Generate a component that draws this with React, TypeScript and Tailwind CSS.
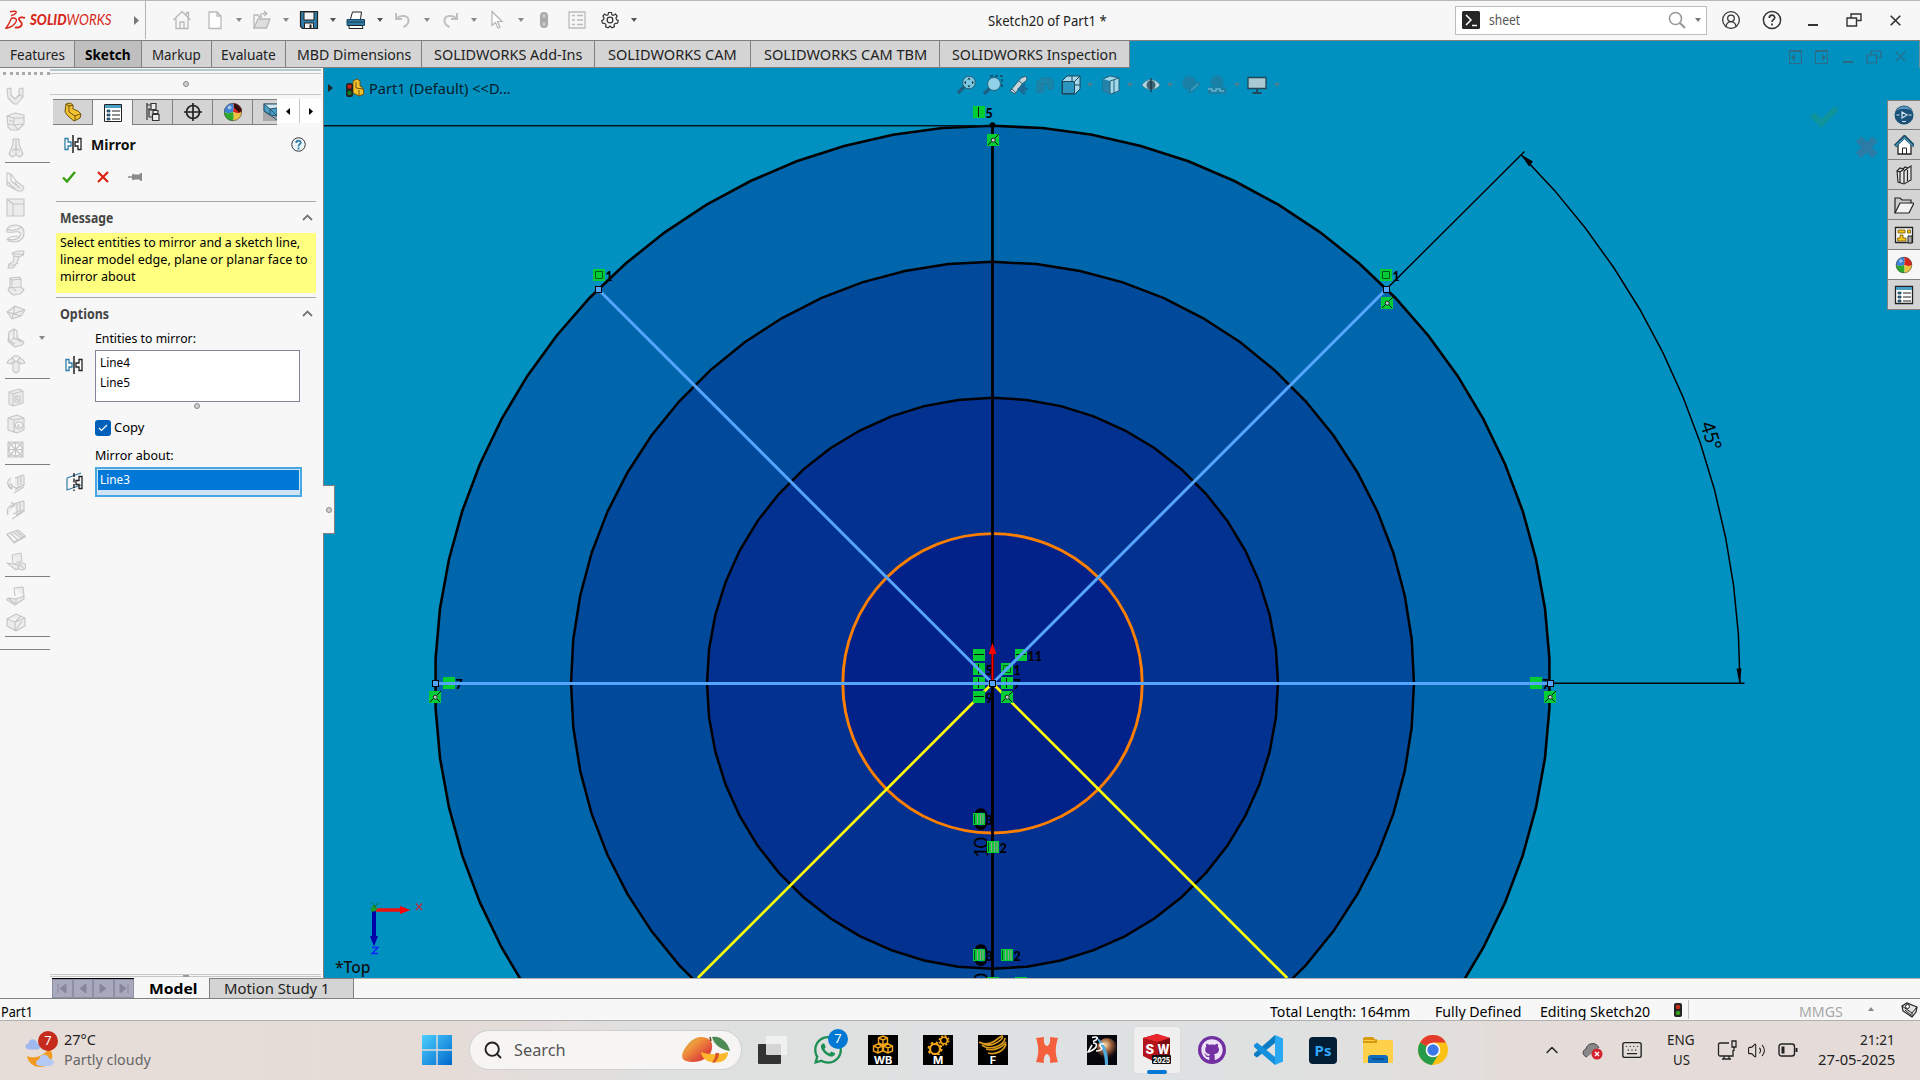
import React, { useLayoutEffect, useRef, useState } from "react";
import {
  Search, Keyboard, ChevronUp, Volume2, CircleUserRound,
} from "lucide-react";
import { FaWhatsapp, FaGithub } from "react-icons/fa";

/* Text squeezed or stretched to a fixed advance width. */
function Fit({ w, className = "", children }: { w: number; className?: string; children: React.ReactNode }) {
  const ref = useRef<HTMLSpanElement>(null);
  const [k, setK] = useState(1);
  useLayoutEffect(() => {
    if (ref.current) setK(w / ref.current.offsetWidth);
  }, [w]);
  return (
    <span className={"inline-block shrink-0 text-left " + className} style={{ width: w }}>
      <span ref={ref} className="inline-block origin-left whitespace-nowrap" style={{ transform: `scaleX(${k})` }}>
        {children}
      </span>
    </span>
  );
}

type SvgProps = { w?: number; h?: number; vb?: string; className?: string; children: React.ReactNode };
function Svg({ w = 20, h = 20, vb = "0 0 20 20", className = "", children }: SvgProps) {
  return (
    <svg width={w} height={h} viewBox={vb} fill="none" className={"block shrink-0 " + className}>
      {children}
    </svg>
  );
}

function Drop({ w = "w-[23px]", color = "text-[#555]" }: { w?: string; color?: string }) {
  return (
    <span className={"flex shrink-0 items-center justify-center " + w + " " + color}>
      <Svg w={6} h={4} vb="0 0 6 4"><path d="M0 0h6L3 4z" fill="currentColor" /></Svg>
    </span>
  );
}

function Slot({ w = "w-6", children }: { w?: string; children: React.ReactNode }) {
  return <span className={"flex shrink-0 items-center justify-center " + w}>{children}</span>;
}

function Dot() {
  return <span className="block h-[6px] w-[6px] rounded-full border border-[#8a8a8a] bg-[#d0d0d0]" />;
}

/* ---------- title bar ---------- */
function TitleBar() {
  return (
    <div className="flex h-[41px] shrink-0 items-center border-t border-b border-t-[#b8b8b8] border-b-[#808080] bg-[#f7f7f7] pb-px">
      <div className="flex h-full w-[146px] shrink-0 items-center border-r border-[#b4b4b4] pl-[5px]">
        <Svg w={21} h={20} vb="0 0 21 20">
          <path d="M5 1.800c3.500-.8 7-.8 6 1-.8 1.300-2.500 2.200-5 3" stroke="#d8281c" strokeWidth="1.500" />
          <path d="M6.500 8.200c4.500-.8 6 1.200 4 4.500-1.800 2.800-5.500 5-9.500 5.500 2.500-3.500 4-6.500 5.500-10z" stroke="#d8281c" strokeWidth="1.400" />
          <path d="M20 8c-3-1.300-6.200-.6-6 1.300.2 1.800 3.400 2.700 2.800 5.200-.5 2.200-3.500 3.300-7 3.200" stroke="#d8281c" strokeWidth="1.800" />
        </Svg>
        <Fit w={82} className="ml-1 font-['Lato'] text-[15.500px] italic text-[#d8281c]">
          <b className="font-black">SOLID</b>WORKS
        </Fit>
        <span className="ml-[22px]"><Svg w={5} h={9} vb="0 0 5 9"><path d="M0 0l5 4.500L0 9z" fill="#777" /></Svg></span>
      </div>
      <div className="ml-6 flex h-full items-center">
        <Slot><Svg><path d="M1.500 10L10 1.500l8.500 8.500M4 8.500v10h12v-10M8 18v-6h4v6M14.500 5V2.500h2V7" stroke="#b9b9b9" strokeWidth="1.300" /></Svg></Slot>
        <span className="w-[9px]" />
        <Slot><Svg><path d="M4 2h8l4 4v12.500H4zM12 2v4h4" stroke="#b9b9b9" strokeWidth="1.300" fill="#fff" /></Svg></Slot><Drop color="text-[#888]" />
        <Slot><Svg><path d="M2 18V5h4l1 2h3" stroke="#b9b9b9" strokeWidth="1.300" /><path d="M2 18l4-9h12l-3.500 9z" stroke="#b9b9b9" strokeWidth="1.300" fill="#dedede" /><path d="M8 7c0-3 3-4 6-3.500M12 1l3 2.500-3 2.500" stroke="#b9b9b9" strokeWidth="1.300" /></Svg></Slot><Drop color="text-[#888]" />
        <Slot><Svg><path d="M1.500 1.500h17v17h-15l-2-2z" fill="#2f7ca6" stroke="#222" strokeWidth="1.200" /><path d="M5 2h10v8H5z" fill="#f4f4f4" stroke="#222" /><path d="M5.500 13h9v5.500h-9z" fill="#eee" stroke="#222" /><path d="M10.500 14.500h2v3.500h-2z" fill="#222" /></Svg></Slot><Drop />
        <Slot><Svg><path d="M4.500 9l2-7h9l-1 7" fill="#fff" stroke="#222" /><path d="M1 9.500h17.500v6H1z" fill="#2f7ca6" stroke="#1c4a63" /><path d="M3 15.500h13l1 3H3z" fill="#fff" stroke="#222" /><path d="M1 12h17" stroke="#1c3a50" /></Svg></Slot><Drop />
        <Slot><Svg><path d="M3 3v6h6M3.500 8.500C7 4.500 16 5 15.500 11c0 3-3 5-5 6" stroke="#c0c0c0" strokeWidth="2" /></Svg></Slot><Drop color="text-[#888]" />
        <Slot><Svg><path d="M17 3v6h-6M16.500 8.500C13 4.500 4 5 4.500 11c0 3 3 5 5 6" stroke="#c0c0c0" strokeWidth="2" /></Svg></Slot><Drop color="text-[#888]" />
        <Slot><Svg><path d="M5 1.500v14l3.500-3 2.500 5.500 2-1-2.500-5.500H15z" stroke="#b4b4b4" strokeWidth="1.200" fill="#fff" /></Svg></Slot><Drop color="text-[#888]" />
        <Slot><Svg><rect x="6" y="2" width="8" height="16" rx="4" fill="#aaa" /><circle cx="10" cy="6" r="2" fill="#c8c8c8" /><circle cx="10" cy="14" r="2" fill="#c8c8c8" /></Svg></Slot>
        <span className="w-[9px]" />
        <Slot><Svg><path d="M2 2h16v16H2zM5 5.500h3M5 10h3M5 14.500h3M10 5.500h6M10 10h6M10 14.500h6" stroke="#bcbcbc" strokeWidth="1.300" /></Svg></Slot>
        <span className="w-[9px]" />
        <Slot><Svg w={18} h={18} vb="0 0 24 24"><path d="M10 2h4l.6 3 2 .9L19.300 4l2.200 2.700-1.500 2.500.6 2.200L23 13l-1 3.400-3 .2-1.500 1.600.3 3-3.300 1.200L12 20l-2.500 2.400-3.300-1.200.3-3L5 16.600l-3-.2L1 13l2.400-1.600.6-2.200-1.500-2.500L4.700 4l2.700 1.900 2-.9z" stroke="#333" strokeWidth="1.600" /><circle cx="12" cy="12" r="3.800" stroke="#333" strokeWidth="1.700" /></Svg></Slot><Drop />
      </div>
      <Fit w={119} className="ml-[343px] text-[14px] text-[#222]">Sketch20 of Part1 *</Fit>
      <div className="ml-[348px] flex h-[29px] w-[252px] shrink-0 items-center border border-[#bdbdbd] bg-white pl-[6px]">
        <Svg w={18} h={18} vb="0 0 18 18"><rect width="18" height="18" rx="1.500" fill="#262626" /><path d="M4 4l5 5-5 5M10 14.500h5" stroke="#fff" strokeWidth="1.500" /></Svg>
        <Fit w={31} className="-mt-[2px] ml-[9px] text-[14px] text-[#555]">sheet</Fit>
        <Svg w={18} h={18} vb="0 0 18 18" className="ml-[148px]"><circle cx="7.500" cy="7.500" r="6" stroke="#999" strokeWidth="1.600" /><path d="M12 12l5 5" stroke="#999" strokeWidth="2.200" /></Svg>
        <Drop color="text-[#777]" />
      </div>
      <div className="flex items-center text-[#333]">
        <Slot w="w-[48px]"><CircleUserRound size={20} strokeWidth={1.500} /></Slot>
        <Slot w="w-[34px]"><Svg><circle cx="10" cy="10" r="8.600" stroke="#333" strokeWidth="1.500" /><path d="M7.300 8c0-3.800 5.600-3.600 5.400-.3-.1 2-2.700 2-2.700 4.300M10 13.500v2" stroke="#333" strokeWidth="1.700" /></Svg></Slot>
        <Slot w="w-[48px]"><span className="mt-[9px] block h-[2px] w-[10px] bg-[#333]" /></Slot>
        <Slot w="w-[34px]"><Svg w={16} h={14} vb="0 0 16 14"><path d="M5 4.500V1h10v6.500h-4M1 5h9.500v8H1z" stroke="#333" strokeWidth="1.400" /></Svg></Slot>
        <Slot w="w-[48px]"><Svg w={11} h={11} vb="0 0 11 11"><path d="M.7.7l9.600 9.600M10.300.7L.7 10.300" stroke="#333" strokeWidth="1.600" /></Svg></Slot>
      </div>
    </div>
  );
}

/* ---------- command manager tabs ---------- */
const TABS: { label: string; tab: string; w: number; on?: boolean }[] = [
  { label: "Features", tab: "w-[75px]", w: 55 },
  { label: "Sketch", tab: "w-[67px]", w: 46, on: true },
  { label: "Markup", tab: "w-[70px]", w: 49 },
  { label: "Evaluate", tab: "w-[74px]", w: 55 },
  { label: "MBD Dimensions", tab: "w-[136px]", w: 114 },
  { label: "SOLIDWORKS Add-Ins", tab: "w-[173px]", w: 148 },
  { label: "SOLIDWORKS CAM", tab: "w-[156px]", w: 129 },
  { label: "SOLIDWORKS CAM TBM", tab: "w-[189px]", w: 163 },
  { label: "SOLIDWORKS Inspection", tab: "w-[190px]", w: 165 },
];

function CommandTabs() {
  return (
    <div className="flex h-[27px] shrink-0 bg-[#0091c1]">
      {TABS.map((t) => (
        <div
          key={t.label}
          className={
            "flex shrink-0 items-center justify-center border-r border-b border-[#808080] " + t.tab + " " +
            (t.on ? "bg-[#bfbfbf] font-bold text-black" : "bg-[#d4d4d4] text-[#222]")
          }
        >
          <Fit w={t.w} className="text-[15px]">{t.label}</Fit>
        </div>
      ))}
      <div className="flex flex-1 items-center justify-end gap-[13px] border-r border-[#6f8f9c] pr-[13px] pt-[4px]">
        <Svg w={13} h={14} vb="0 0 13 14"><path d="M.5.5h12v13H.5zM.5 1.500h12" stroke="#2d6b85" /><path d="M6 4v7L2 7.500z" fill="#2d6b85" /></Svg>
        <Svg w={13} h={14} vb="0 0 13 14"><path d="M.5.5h12v13H.5zM.5 1.500h12" stroke="#2d6b85" /><path d="M7 4v7l4-3.500z" fill="#2d6b85" /></Svg>
        <span className="mt-[10px] ml-[2px] block h-[2px] w-[10px] bg-[#2d6b85]" />
        <Svg w={16} h={14} vb="0 0 16 14"><path d="M5 4.500V1h10v6.500h-4M1 5h9.500v8H1z" stroke="#2d6b85" strokeWidth="1.200" /></Svg>
        <Svg w={11} h={11} vb="0 0 11 11"><path d="M.7.7l9.600 9.600M10.300.7L.7 10.300" stroke="#2d6b85" strokeWidth="1.200" /></Svg>
      </div>
    </div>
  );
}

/* ---------- left tool strip ---------- */
const STRIP: string[][] = [
  [
    "M1 3l4-1v7l4 4 4-4V3l4-1v9l-6 7H8l-6-6zM9 13l5-4 3 2-6 7",
    "M1 4l8-3 9 2v9l-6 6H5l-3-3zM1 4l7 2h10M8 6v6l4 6M3 8l5 2M2 12l6 1 9-1",
    "M7 1h6v5l4 10-3 3-4-2-4 2-3-3 4-10zM7 1v6M10 1v16M13 1v6M6 13l4-3 4 3",
  ],
  [
    "M1 1l4 1 5 7 8 6-2 4h-4L1 13zM1 1v8l9 9M5 2v7l9 7M9 10l2 3",
    "M1 1h17v17H1zM1 1l6 5v12M7 6h11",
    "M1 5c2-4 6-4 9-4s8 2 8 8-5 9-9 9-7-1-8-3c3 1 8 1 11-1s3-5 1-6-8 1-12 0zM1 5c4 2 10 1 15-2M2 15c1-3 6-2 10-3",
    "M6 3l6-2h6l-1 4-4 2-2 6-4 5H2l1-4 4-2 1-6zM6 4h7l5 1M3 15h5l4-2M8 6l5 1",
    "M4 2l9-1 2 2v8l3 3-4 4-7 1-5-5 2-3zM4 2l2 2v7l4 4M6 4l9-1M2 12l12-1",
    "M1 10l8-6 10 4-4 6-9 3zM1 10l14 4M9 4l-3 13M19 8L6 12",
    "M3 4l5-3 3 2v7l7 4-2 3-7 2-7-6zM3 4v8l6 4M8 1v9l8 4M5 12l4-2",
    "M1 9c1-3 3-4 5-5 1-3 7-3 8 0 3 1 4 3 5 5l-4 1-2-2v9l-3 2-3-2V8L5 10zM6 4l4 4 4-4M7 8h6",
  ],
  [
    "M3 4l10-3 4 2v12L7 18l-4-2zM3 4l4 2v12M7 6l10-3M9 8h5v6H9zM11 8v4h3",
    "M2 4l9-3 7 3v12l-7 3-9-3zM2 4l6 2v12M8 6l10-2M13 8c-5 0-5 7 0 7s5-7 0-7zM13 10l-2 3h4",
    "M2 2h15v15H2zM9.500 3c-9 0-9 13 0 13s9-13 0-13zM2 2l15 15M17 2L2 17M9.500 2v15M2 9.500h15",
  ],
  [
    "M9 4l8-3 1 1v9l-9 5M12 3v9M15 2v9M5 4c-5 3-4 8 0 11M2 11l4 4v-5zM6 12l4 2 8-3M8 19l10-6",
    "M8 4l9-3 1 1v9l-8 4M11 3v9M14 2v9M2 15c-2-6 1-10 6-10M5 2l4 3-4 3M7 14l10-4M6 19l11-7",
    "M1 8l11-4 7 6-11 6zM4 7l8 7M7 6l8 6M10 5l7 6M1 8v1l7 8 11-6v-1",
    "M6 3l9-2 1 8-8 3-7-1 9 7 3-2M6 3l1 8M8 12l6 2M16 11c-5 0-5 7 0 7s5-7 0-7zM14 12l4 5",
  ],
  [
    "M8 2l9-1 1 9-8 3-8-1 8 6 8-5v-3M8 2l1 8M1 12v2l8 5 9-6M10 13v5",
    "M1 7l9-5 9 4v8l-9 5-9-5zM1 7l8 3 10-4M9 10v9M9 10l6-6M9 19l7-10",
  ],
];

function ToolStrip() {
  return (
    <div className="flex w-[50px] shrink-0 flex-col bg-[#f7f7f7]">
      <div className="mt-[4px] ml-[3px] mb-[8px] h-[3px] border-t-[3px] border-dotted border-[#a9a9a9]" />
      {STRIP.map((g, gi) => (
        <React.Fragment key={gi}>
          {g.map((d, i) => (
            <div key={i} className="flex h-[26px] items-center pl-[6px]">
              <Svg><path d={d} stroke="#c6c6c6" strokeWidth="1.100" strokeLinejoin="round" fill="#ececec" /></Svg>
              {gi === 1 && i === 6 && <span className="ml-[12px]"><Drop w="w-[7px]" color="text-[#888]" /></span>}
            </div>
          ))}
          <div className="flex h-[8px] items-start pt-px pl-[5px]"><span className="h-px w-full bg-[#808080]" /></div>
        </React.Fragment>
      ))}
      <div className="mt-[6px] h-px bg-[#808080]" />
    </div>
  );
}

/* ---------- property manager ---------- */
function MirrorIcon({ plane = false }: { plane?: boolean }) {
  return plane ? (
    <Svg w={18} h={20} vb="0 0 18 20">
      <path d="M1 6l14-5M1 6v12l14-5" stroke="#2f7ca6" strokeWidth="1.200" />
      <path d="M8 1v18" stroke="#111" strokeWidth="1.300" strokeDasharray="4 1.500" />
      <path d="M16 4.500h-3v4h-3v4h3v4h3z" stroke="#222" strokeWidth="1.300" />
    </Svg>
  ) : (
    <Svg w={18} h={20} vb="0 0 18 20">
      <path d="M1 4.500h3v3.500h3v4H4v3.500H1z" stroke="#2f7ca6" strokeWidth="1.300" fill="#fff" />
      <path d="M9 1v18" stroke="#111" strokeWidth="1.400" />
      <path d="M17 4.500h-3v3.500h-3v4h3v3.500h3z" stroke="#222" strokeWidth="1.300" fill="#fff" />
    </Svg>
  );
}

function Ball({ size = 20, shade = false }: { size?: number; shade?: boolean }) {
  return (
    <Svg w={size} h={size}>
      <path d="M10 1a9 9 0 0 0-9 9c3 1.500 6 1.500 9 0 1-3 1-6 0-9z" fill="#3b82d6" />
      <path d="M10 1a9 9 0 0 1 9 9c-2 1.500-6 1.500-9 0 1-3 1-6 0-9z" fill="#d7261e" />
      <path d="M1 10c0 5 4 9 9 9 1-3 1-6 0-9-3 1.500-6 1.500-9 0z" fill="#2faa2f" />
      <path d="M10 19a9 9 0 0 0 9-9c-2 1.500-6 1.500-9 0 1 3 1 6 0 9z" fill="#e8c440" />
      <circle cx="6.500" cy="5.500" r="2" fill="#fff" opacity=".5" />
      {shade && <path d="M11 1.500c4 0 7 3 8 7l-3 2-5-5z" fill="#3a0b0b" />}
      <circle cx="10" cy="10" r="8.700" stroke="#444" strokeWidth=".6" />
    </Svg>
  );
}

function Section({ label, w }: { label: string; w: number }) {
  return (
    <div className="flex h-[32px] items-center justify-between border-t border-[#a6a6a6] pr-[3px] pl-[4px]">
      <Fit w={w} className="text-[14px] font-bold text-[#444]">{label}</Fit>
      <Svg w={11} h={7} vb="0 0 11 7"><path d="M1 6l4.500-4.500L10 6" stroke="#777" strokeWidth="1.800" /></Svg>
    </div>
  );
}

function PropertyPanel() {
  const tab = "flex h-[26px] w-[40px] shrink-0 items-center justify-center border-t border-r border-b border-[#808080] bg-[#d4d4d4]";
  return (
    <div className="flex w-[273px] shrink-0 flex-col bg-[#f7f7f7]">
      <div className="mt-px mr-[2px] h-[2px] bg-[#b5c9cd]" />
      <div className="mt-[2px] mr-[2px] flex h-[22px] items-center justify-center border-t border-b border-[#c6c6c6]"><Dot /></div>
      <div className="mt-[4px] ml-[3px] flex h-[26px]">
        <div className={tab}>
          <Svg><path d="M3 2l4-1 3 2v4l5 2 3 3-1 4-6 3-6-5-3-4z" fill="#f2c230" stroke="#6e5208" /><path d="M3 2l3 2v6l6 4 5-2M6 4l4-1M12 14v5" stroke="#6e5208" /></Svg>
        </div>
        <div className="flex h-[26px] w-[40px] shrink-0 items-center justify-center border-t border-r border-[#808080]">
          <Svg><path d="M1.500 1.500h17v17h-17z" fill="#fff" stroke="#222" /><path d="M2 2h16v3H2z" fill="#4c9fc4" /><path d="M4 7h3v2H4zM4 11h3v2H4zM4 15h3v2H4z" fill="#2f7ca6" stroke="#123" strokeWidth=".6" /><path d="M9 8h8M9 12h8M9 16h8" stroke="#222" /></Svg>
        </div>
        <div className={tab}><Svg><path d="M4 1v17M4 3h4M6 15h3M6 6v9M6 8h3" stroke="#333" strokeWidth="1.200" /><path d="M8 1.500h5v6H8zM10 8.500h5v3h-5zM9.500 12.500h6.500v6H9.500z" fill="#eee" stroke="#333" strokeWidth="1.200" /></Svg></div>
        <div className={tab}><Svg><circle cx="10" cy="10" r="6.500" stroke="#222" strokeWidth="1.700" /><path d="M10 1v18M1 10h18" stroke="#222" strokeWidth="1.700" /></Svg></div>
        <div className={tab}><Ball size={20} shade /></div>
        <div className="flex h-[26px] w-[24px] shrink-0 items-center justify-end overflow-hidden border-t border-b border-[#808080] bg-[#d4d4d4]">
          <Svg w={14} h={20} vb="0 0 14 20"><path d="M0 1h14v18H0z" fill="#a8a8a8" /><path d="M1 2h13v12H7z" fill="#cfe5ef" /><path d="M1 2l6 5 7-1v8l-7-1-6-4z" fill="#4c9fc4" stroke="#24536b" /><path d="M1 2h13M7 7v6M7 7l7 7M1 9l6 4 7 5" stroke="#24536b" /></Svg>
        </div>
        <div className="flex h-[24px] w-[23px] items-center justify-center border-r border-[#c6c6c6] bg-white"><Svg w={4} h={7} vb="0 0 4 7"><path d="M4 0v7L0 3.500z" fill="#000" /></Svg></div>
        <div className="flex h-[24px] w-[21px] items-center justify-center bg-white"><Svg w={4} h={7} vb="0 0 4 7"><path d="M0 0v7l4-3.500z" fill="#000" /></Svg></div>
      </div>
      <div className="mr-[7px] ml-[6px] flex flex-col">
        <div className="mt-[9px] flex h-[20px] items-center pl-[8px]">
          <MirrorIcon />
          <Fit w={45} className="ml-[9px] text-[15px] font-bold text-[#111]">Mirror</Fit>
          <Svg w={15} h={15} vb="0 0 20 20" className="ml-[155px]"><circle cx="10" cy="10" r="9" stroke="#333" strokeWidth="1.300" fill="#eef6fa" /><path d="M7 8c0-4 6-4 6-.5 0 2-3 2-3 5M10 14v2.500" stroke="#2f7ca6" strokeWidth="2.400" /></Svg>
        </div>
        <div className="mt-[13px] flex h-[20px] items-center pl-[6px]">
          <Svg w={14} h={12} vb="0 0 14 12"><path d="M1 6.500l4 4L13 1" stroke="#35a010" strokeWidth="2.400" /></Svg>
          <Svg w={12} h={12} vb="0 0 12 12" className="ml-[21px]"><path d="M1 1l10 10M11 1L1 11" stroke="#de1f10" strokeWidth="2.200" /></Svg>
          <Svg w={14} h={10} vb="0 0 14 10" className="ml-[19px]"><path d="M0 4.300h4V2.500l2-1v1h4V3l3-2h1v8h-1l-3-2v.5H6v1l-2-1V5.700H0z" fill="#8a8a8a" /></Svg>
        </div>
        <div className="h-[14px]" />
        <Section label="Message" w={53} />
        <div className="flex h-[60px] flex-col bg-[#ffff80] pt-px pl-[4px] text-[13px] leading-[17px] text-black">
          <Fit w={240}>Select entities to mirror and a sketch line,</Fit>
          <Fit w={248}>linear model edge, plane or planar face to</Fit>
          <Fit w={75}>mirror about</Fit>
        </div>
        <div className="h-[4px]" />
        <Section label="Options" w={49} />
        <div className="flex text-[13px] text-black">
          <div className="w-[39px] shrink-0 pl-[9px] pt-[26px]"><MirrorIcon /></div>
          <div className="flex flex-col">
            <Fit w={101} className="h-[21px] leading-[18px]">Entities to mirror:</Fit>
            <div className="flex h-[52px] w-[205px] flex-col border border-[#84849c] bg-white pt-px pl-[4px] leading-[20px]">
              <Fit w={30}>Line4</Fit>
              <Fit w={30}>Line5</Fit>
            </div>
            <div className="flex h-[8px] w-[204px] items-center justify-center"><Dot /></div>
            <div className="mt-[10px] flex h-[16px] items-center gap-[3px]">
              <span className="flex h-4 w-4 items-center justify-center rounded-[3px] bg-[#005fb8]"><Svg w={10} h={8} vb="0 0 10 8"><path d="M1 4l2.500 2.500L9 1" stroke="#fff" strokeWidth="1.200" /></Svg></span>
              <Fit w={30}>Copy</Fit>
            </div>
            <Fit w={79} className="mt-[10px] h-[21px] leading-[18px]">Mirror about:</Fit>
          </div>
        </div>
        <div className="flex text-[13px]">
          <div className="w-[39px] shrink-0 pl-[10px] pt-[5px]"><MirrorIcon plane /></div>
          <div className="h-[30px] w-[207px] border-2 border-[#4aa8e0] bg-[#cfe4f8] p-px">
            <div className="flex h-[20px] items-center bg-[#0078d7] pl-[2px] text-white"><Fit w={30}>Line3</Fit></div>
          </div>
        </div>
      </div>
      <div className="mt-auto mr-[2px] mb-[1px] flex h-[3px] items-center justify-center border-t border-b border-[#c6c6c6]"><span className="h-[2px] w-[6px] bg-[#999]" /></div>
    </div>
  );
}

/* ---------- sketch canvas ---------- */
const CX = 992.5;
const CY = 683.3;
function ring(r: number, n: number) {
  return Array.from({ length: n }, (_, i) => {
    const a = (i / n) * Math.PI * 2;
    return `${(CX + r * Math.sin(a)).toFixed(1)},${(CY - r * Math.cos(a)).toFixed(1)}`;
  }).join(" ");
}
function arc(r: number, steps: number) {
  return Array.from({ length: steps + 1 }, (_, i) => {
    const a = Math.PI / 4 + (i / steps) * (Math.PI / 4);
    return `${(CX + r * Math.sin(a)).toFixed(1)},${(CY - r * Math.cos(a)).toFixed(1)}`;
  }).join(" ");
}

type MarkKind = "v" | "h" | "x" | "q" | "s" | "n";
const MARKS: [number, number, MarkKind, string?][] = [
  [973, 106, "v", "5"], [987, 134, "x"],
  [593, 269, "q", "1"], [1380, 269, "q", "1"], [1381, 297, "x"],
  [973, 649, "h"], [973, 663, "v", "5"], [973, 677, "v"], [973, 691, "h", "9"],
  [1015, 649, "h", "11"], [1001, 663, "q", "1"], [1001, 677, "v", "7"], [1001, 691, "x"],
  [443, 677, "n", "7"], [429, 691, "x"], [1530, 677, "n", "7"], [1544, 691, "x"],
  [973, 813, "s", "3"], [987, 841, "s", "2"], [973, 949, "s", "3"], [1001, 949, "s", "2"],
  [987, 977, "s"], [1015, 977, "s"],
];

function Mark({ x, y, kind, label }: { x: number; y: number; kind: MarkKind; label?: string }) {
  return (
    <g>
      {label && <text x={x + 12.500} y={y + 11.500} fontFamily="Lato, sans-serif" fontWeight="900" fontSize="12.500" fill="#000">{label}</text>}
      <rect x={x} y={y} width="12" height="12" fill="#00cc33" />
      {kind === "v" && <path d={`M${x + 5.500} ${y + 1}v10`} stroke="#111" />}
      {kind === "h" && <path d={`M${x + 1} ${y + 5.500}h10`} stroke="#111" />}
      {kind === "q" && <path d={`M${x + 2.500} ${y + 2.500}h7v7h-7z`} stroke="#052" fill="none" />}
      {kind === "x" && (
        <>
          <path d={`M${x + 1} ${y + 11}l4-4M${x + 8} ${y + 4}l4-4M${x + 8} ${y + 8}l3 3`} stroke="#111" fill="none" />
          <circle cx={x + 6.200} cy={y + 6.200} r="2" stroke="#222" fill="#bcc" />
        </>
      )}
      {kind === "s" && (
        <>
          <path d={`M${x + 1.500} ${y + 1}v10`} stroke="#052" />
          <path d={`M${x + 4.500} ${y + 1}v10M${x + 7.500} ${y + 1}v10M${x + 10} ${y + 1}v10`} stroke="#8fa08f" strokeWidth="1.200" />
        </>
      )}
    </g>
  );
}

function Node({ x, y }: { x: number; y: number }) {
  return <rect x={x - 2.500} y={y - 2.500} width="6" height="6" fill="#55a5ff" stroke="#000" />;
}

function Dim100({ y }: { y: number }) {
  return (
    <g fontFamily="Lato, sans-serif" fontSize="20" fill="#000">
      <text transform={`translate(987.500 ${y}) rotate(-90)`} textLength="21">10</text>
      <text transform={`translate(987.500 ${y - 27}) rotate(-90)`} textLength="24" lengthAdjust="spacingAndGlyphs">0</text>
    </g>
  );
}

function Canvas() {
  return (
    <svg width="1596" height="910" viewBox="324 68 1596 910" className="block">
      <rect x="324" y="68" width="1596" height="910" fill="#0091c1" />
      <polygon points={ring(557.500, 70)} fill="#0066ab" stroke="#000" strokeWidth="2.600" />
      <polygon points={ring(421.500, 60)} fill="#00499b" stroke="#000" strokeWidth="2.500" />
      <polygon points={ring(285.500, 52)} fill="#03318f" stroke="#000" strokeWidth="2.500" />
      <circle cx={CX} cy={CY} r="149.700" fill="#02228a" stroke="#ff8000" strokeWidth="2.900" />
      <path d="M324 125.700H992.500" stroke="#00161e" strokeWidth="1.500" />
      <path d={`M${CX} 125V978`} stroke="#000" strokeWidth="2.800" />
      <circle cx={CX} cy="125" r="2.800" fill="#000" />
      <path d="M1386 289.500L1524.500 151.500M1551 683.300H1744.500" stroke="#000" strokeWidth="1.400" />
      <polyline points={arc(747.500, 12)} stroke="#000" strokeWidth="1.500" fill="none" />
      <path d="M1521 154.500l12 7-4 5zM1739.500 684l-3-15.500h5z" fill="#000" />
      <text transform="translate(1700 424) rotate(72)" fontFamily="Lato, sans-serif" fontSize="19.500" textLength="29" fill="#000">45°</text>
      <Dim100 y={858} />
      <Dim100 y={994} />
      <path d={`M${CX} ${CY}L697.800 978M${CX} ${CY}L1287.200 978`} stroke="#ffff00" strokeWidth="2.700" />
      {MARKS.map(([x, y, k, l], i) => <Mark key={i} x={x} y={y} kind={k} label={l} />)}
      <path d={`M${CX} ${CY}L598.400 289.500M${CX} ${CY}L1386 289.500M435.500 683.500H1550`} stroke="#55a5ff" strokeWidth="3" />
      <path d="M992.500 680V652" stroke="#f00" strokeWidth="2" />
      <path d="M992.500 643l3.800 11h-7.600z" fill="#f00" />
      <Node x={992} y={683} /><Node x={598} y={289} /><Node x={1386} y={289} /><Node x={435} y={683} /><Node x={1550} y={683} />
      {/* orientation triad */}
      <path d="M376 910h26" stroke="#f01010" strokeWidth="3.500" />
      <path d="M400 906l10.500 4-10.500 4z" fill="#f00" />
      <path d="M374 911v27" stroke="#0000a8" strokeWidth="4" />
      <path d="M370 936h8l-4 10.500z" fill="#0000a8" />
      <path d="M370.500 908.500l3.500-3.500 3.500 3.500-2.500 3h-4z" fill="#1c9a2c" />
      <path d="M372 903l4 4M378.500 903l-4.500 4.500" stroke="#0a6e1c" />
      <path d="M416 903.500l6 6.500M422 903.500l-6 6.500" stroke="#c02a3a" strokeWidth="1.200" />
      <path d="M372 947.500h6l-6 6h6" stroke="#0a20ff" strokeWidth="1.300" fill="none" />
      <path d="M1810 117l4.500-4.500 7 6.500 13-13 4 4-17 18z" fill="#10949c" />
      <path d="M1858.500 139l16.500 16.500M1875 139l-16.500 16.500" stroke="#2a7ba6" strokeWidth="7.500" />
    </svg>
  );
}

function HeadsUp() {
  const s = "#2b5f78";
  const dd = "text-[#557b8f]";
  return (
    <div className="absolute top-[7px] left-[630px] flex h-[20px] items-center">
      <Slot w="w-[26px]"><Svg><path d="M1 18l8-8" stroke="#1d5f80" strokeWidth="3.400" /><circle cx="12" cy="7.500" r="6.300" fill="#7cc7e0" stroke={s} /><path d="M12 2.500l1.500 2h-3zM12 12.500l1.500-2h-3zM7 7.500l2-1.500v3zM17 7.500l-2-1.500v3z" fill="#123" /></Svg></Slot>
      <Slot w="w-[26px]"><Svg><path d="M7 1h12v12" stroke="#16465c" strokeDasharray="3 2" strokeWidth="1.300" /><path d="M1 19l6-6" stroke="#1d5f80" strokeWidth="3.400" /><circle cx="11" cy="9" r="6.500" fill="#8fd2e8" stroke={s} /></Svg></Slot>
      <Slot w="w-[26px]"><Svg><path d="M1 16L12 3l5-2 1 4-5 4L6 19z" fill="#c4d4d9" stroke={s} /><path d="M3 14l4 4M10 6l4 3" stroke={s} /><path d="M19 14h-6M15 10l-5 4 5 5z" stroke="#1b6d99" strokeWidth="2.500" fill="#1b6d99" /></Svg></Slot>
      <Slot w="w-[26px]"><Svg><path d="M2 7c3-5 13-5 16-2v9h-5V9H9v8H2z" fill="#1b86ac" stroke="#237895" /><path d="M2 14l6-6M3 17l5-5" stroke="#237895" /></Svg></Slot>
      <Slot w="w-[26px]"><Svg><path d="M1 6l5-5h13v13l-5 5H1z" fill="#a4d8ea" stroke="#1d4558" /><path d="M1.500 6.500h12v12h-12z" fill="#2d96c0" stroke="#1d4558" /><path d="M14 6l5-5M11 1v5M14 10h5" stroke="#1d4558" /></Svg></Slot>
      <Drop w="w-[11px]" color={dd} />
      <span className="w-[3px]" />
      <Slot w="w-[26px]"><Svg><path d="M2 4l7-3 9 2v13l-8 3-8-3z" fill="#9fd8ea" stroke={s} /><path d="M2 4l7 2v13l-7-3z" fill="#2483ab" /><path d="M9 6l9-3M9 6v13M13 5v13" stroke={s} /></Svg></Slot>
      <Drop w="w-[12px]" color={dd} />
      <Slot w="w-[30px]"><Svg><path d="M1 10c4-7 14-7 18 0-4 6-14 6-18 0z" fill="#b4d8e0" stroke="#4d8ca2" /><circle cx="10" cy="10" r="4.500" fill="#3c6474" /><path d="M10 3v14" stroke="#123" /></Svg></Slot>
      <Drop w="w-[8px]" color={dd} />
      <span className="w-[4px]" />
      <Slot w="w-[26px]"><Svg><circle cx="8" cy="8" r="7" fill="#1a80a6" /><path d="M8 18l2-5 7-6 2 2-7 7z" fill="#2f98bd" stroke="#1c7696" /></Svg></Slot>
      <Slot w="w-[26px]"><Svg><circle cx="10" cy="7" r="6.500" fill="#1a80a6" /><path d="M1 12h18v7H1z" fill="#1c7ea2" /><path d="M1 14h4v2h4v-2h4v2h4" stroke="#63b5cf" strokeWidth="1.500" /></Svg></Slot>
      <Drop w="w-[14px]" color={dd} />
      <Slot w="w-[26px]"><Svg><path d="M1 2.500h18v11H1z" fill="#a9c9d3" stroke="#234858" strokeWidth="1.300" /><path d="M10 14v3M5.500 18h9" stroke="#234858" strokeWidth="1.800" /></Svg></Slot>
      <Drop w="w-[14px]" color={dd} />
    </div>
  );
}

function TaskPane() {
  const base = "flex items-center justify-center border-t border-[#808080] ";
  const g = base + "h-[30px] bg-[#d4d4d4]";
  return (
    <div className="absolute top-[32px] right-0 w-[33px] border-b border-l border-[#808080]">
      <div className={base + "h-[29px] bg-[#d4d4d4]"}><Svg><circle cx="10" cy="10" r="9.500" fill="#1a527a" /><path d="M2 6a9.500 9.500 0 0 1 16 0c-4-3-12-3-16 0z" fill="#5e9cc4" /><path d="M8 7v6l5-3zM2.500 10h3M14.500 10h3M8 16.500h4" stroke="#d7e8f2" strokeWidth="1.200" /></Svg></div>
      <div className={g}><Svg><path d="M4 9v10h13V9l-6.500-6z" fill="#fff" stroke="#222" strokeWidth="1.300" /><path d="M1 11l9.500-9.500L20 11" stroke="#1c4a63" strokeWidth="3.200" /><path d="M1.500 11l9-8.500 8.500 8.500" stroke="#4c9fc4" strokeWidth="1.200" /><path d="M8.500 19v-6h4v6" stroke="#222" /></Svg></div>
      <div className={g}><Svg><path d="M3 6l3-3 3 1 2-2 3 1 3-2v14l-7 4-6-2z" fill="#e6e6e6" stroke="#222" strokeWidth="1.100" /><path d="M3 6l3 1v11M6 7l4-3M10 6v12M10 6l4-3M13.500 5v11" stroke="#222" strokeWidth="1.200" /></Svg></div>
      <div className={g}><Svg><path d="M1 18V3h5l2 2h9v3" fill="#ccc" stroke="#222" strokeWidth="1.200" /><path d="M1 18L6 8h14l-5 10z" fill="#f2f2f2" stroke="#222" strokeWidth="1.200" /></Svg></div>
      <div className={g}><Svg><path d="M1.500 2.500h17v15h-17z" fill="#fff" stroke="#222" strokeWidth="1.300" /><path d="M4 5h7v3H4zM13.500 5h3v3h-3zM6 10h3v3h3v3H3.500v-3H6z" fill="#f5c518" stroke="#6e5208" strokeWidth=".8" /><path d="M14 11h4v7h-4z" fill="#aaa" stroke="#222" /></Svg></div>
      <div className={base + "h-[30px] bg-[#f7f7f7]"}><Ball size={18} /></div>
      <div className={g}><Svg><path d="M1.500 1.500h17v17h-17z" fill="#fff" stroke="#222" strokeWidth="1.300" /><path d="M2 2h16v3H2z" fill="#4c9fc4" /><path d="M4 7h3v2H4zM4 11h3v2H4zM4 15h3v2H4z" fill="#2f7ca6" stroke="#123" strokeWidth=".6" /><path d="M9 8h8M9 12h8M9 16h8" stroke="#222" /></Svg></div>
    </div>
  );
}

function Viewport() {
  return (
    <div className="relative w-[1597px] shrink-0 border-l border-[#808080]">
      <Canvas />
      <div className="absolute top-[7px] left-[4px] flex h-[26px] items-center">
        <Svg w={5} h={8} vb="0 0 5 8"><path d="M0 0l5 4-5 4z" fill="#222" /></Svg>
        <Svg w={20} h={20} className="ml-[12px]"><path d="M8 3l4-2 3 2v5l3 2 1 6-5 2-6-3z" fill="#f2c230" stroke="#6e5208" /><path d="M11 4v6l7 1M14 12v6" stroke="#6e5208" /><rect x="1" y="5" width="7" height="14" rx="2.500" fill="#222" /><circle cx="4.500" cy="8.500" r="2.200" fill="#c02018" /><circle cx="4.500" cy="15" r="2.200" fill="#157a1c" /></Svg>
        <Fit w={142} className="mt-[2px] ml-[4px] text-[14.500px] text-[#062028]">Part1 (Default) &lt;&lt;D...</Fit>
      </div>
      <HeadsUp />
      <TaskPane />
      <Fit w={35} className="absolute top-[888px] left-[11px] text-[16.500px] leading-[22px] font-medium text-[#111]">*Top</Fit>
      <div className="absolute top-[417px] left-[-1px] flex h-[49px] w-[12px] items-center justify-center border-t border-r border-b border-[#808080] bg-[#f7f7f7]"><Dot /></div>
    </div>
  );
}

/* ---------- bottom bars ---------- */
function ModelTabs() {
  const nav = ["M3 2v9M11 2v9L5 6.500z", "M10 2v9L4 6.500z", "M4 2v9l6-4.500z", "M11 2v9M3 2v9l6-4.500z"];
  return (
    <div className="flex h-[20px] shrink-0 bg-[#f7f7f7] pl-[52px]">
      <div className="flex w-[82px] border-t border-t-black bg-[#8e8ea6]">
        {nav.map((d) => (
          <div key={d} className="m-px flex flex-1 items-center justify-center bg-[#a9a9bd]">
            <Svg w={14} h={13} vb="0 0 14 13"><path d={d} fill="#85859c" stroke="#85859c" /></Svg>
          </div>
        ))}
      </div>
      <div className="flex w-[75px] items-center justify-center pl-[2px]"><Fit w={48} className="text-[15px] font-bold text-black">Model</Fit></div>
      <div className="flex w-[145px] items-center border-t border-r border-l border-[#808080] bg-[#d4d4d4] pl-[14px]"><Fit w={106} className="text-[15px] text-[#222]">Motion Study 1</Fit></div>
      <div className="flex-1 border-t border-[#b0b0b0]" />
    </div>
  );
}

function StatusBar() {
  return (
    <div className="flex h-[23px] shrink-0 items-center overflow-hidden border-t border-b border-t-[#808080] border-b-[#b0b0b0] bg-[#f7f7f7] pt-[5px] pl-[1px] text-[13.500px] text-black">
      <Fit w={32}>Part1</Fit>
      <Fit w={140} className="ml-[1237px]">Total Length: 164mm</Fit>
      <Fit w={87} className="ml-[25px]">Fully Defined</Fit>
      <Fit w={110} className="ml-[18px]">Editing Sketch20</Fit>
      <Svg w={8} h={14} vb="0 0 8 14" className="ml-[24px] mb-[5px]"><rect width="8" height="14" rx="2" fill="#222" /><circle cx="4" cy="4" r="2.300" fill="#c8301c" /><circle cx="4" cy="10" r="2.300" fill="#3a9a1c" /></Svg>
      <span className="mb-[5px] ml-[6px] h-[19px] w-px bg-[#c4c4c4]" />
      <Fit w={44} className="ml-[110px] text-[#a8a8a8]">MMGS</Fit>
      <Svg w={6} h={4} vb="0 0 6 4" className="ml-[25px] mb-[6px]"><path d="M0 4h6L3 0z" fill="#888" /></Svg>
      <Svg w={17} h={16} vb="0 0 17 16" className="ml-[27px] mb-[5px]"><path d="M1 4l5-3 10 4-1 5-4 5-9-6z" stroke="#222" strokeWidth="1.200" fill="#e4e4e4" /><path d="M1 4l10 7 5-6M11 11v4M4 8l6 5" stroke="#222" /><circle cx="6.500" cy="4.500" r="2" fill="#fff" stroke="#222" /></Svg>
    </div>
  );
}

function BlackTile({ label, children }: { label: string; children: React.ReactNode }) {
  return (
    <div className="relative h-[30px] w-[30px] bg-black">
      <Svg w={30} h={20} vb="0 0 30 20">{children}</Svg>
      <span className="absolute inset-x-0 bottom-0 text-center font-['Inter'] text-[11px] leading-[9px] font-bold text-white">{label}</span>
    </div>
  );
}

function Taskbar() {
  return (
    <div className="flex flex-1 items-center bg-[linear-gradient(90deg,#e6ddd9_0%,#e5dcd8_24%,#dfe0e0_34%,#dee1e2_60%,#e0e0df_72%,#e4dcd9_79%,#e5dcd9_100%)] pb-px">
      <div className="relative ml-[25px] h-[36px] w-[32px] shrink-0">
        <Svg w={32} h={36} vb="0 0 32 36">
          <path d="M4 17.500c-4 0-5-5-.5-6C4 6 11 6 12 11c4 1 4 6.500 0 6.500z" fill="#9db9ee" />
          <path d="M2 24c6 3 17 1 22-8 6 6 4 19-9 19-7 0-12-5-13-11z" fill="#f29a1f" />
          <path d="M15 34c-5 0-5-6-1-6.500 1-6 9-6 10-1 6 0 6 7.500 1 7.500z" fill="#b4caf5" />
        </Svg>
        <span className="absolute -top-[1px] left-[13px] flex h-[20px] w-[20px] items-center justify-center rounded-full bg-[#c42b1c] text-[13px] text-white">7</span>
      </div>
      <div className="ml-[7px] flex w-[92px] flex-col text-[14px] leading-[20px]">
        <Fit w={32} className="text-[#222]">27°C</Fit>
        <Fit w={87} className="text-[#666]">Partly cloudy</Fit>
      </div>
      <Svg w={30} h={30} vb="0 0 30 30" className="ml-[266px]">
        <defs><linearGradient id="win" x1="0" y1="0" x2="1" y2="1" gradientUnits="objectBoundingBox"><stop stopColor="#4cd0ff" /><stop offset="1" stopColor="#0067cc" /></linearGradient></defs>
        <path d="M0 0h14.300v14.300H0zM15.700 0H30v14.300H15.700zM0 15.700h14.300V30H0zM15.700 15.700H30V30H15.700z" fill="url(#win)" />
      </Svg>
      <div className="ml-[17px] flex h-[40px] w-[273px] shrink-0 items-center rounded-full border border-[#cfcfcf] bg-[#f6f5f4] pr-[9px] pl-[13px]">
        <Search size={20} strokeWidth={2.300} color="#222" />
        <Fit w={52} className="ml-[11px] text-[16px] text-[#555]">Search</Fit>
        <Svg w={50} h={28} vb="0 0 50 28" className="ml-auto">
          <defs><linearGradient id="mango" x1="0" y1="0" x2="1" y2="1"><stop stopColor="#c5b84a" /><stop offset=".35" stopColor="#f0953c" /><stop offset=".75" stopColor="#dd4439" /><stop offset="1" stopColor="#f0803c" /></linearGradient></defs>
          <path d="M29 5C24 0 14-1 7 7-1 16-2 23 4 25c10 3 22-1 25-9 1.500-4 1.500-8 0-11z" fill="url(#mango)" />
          <path d="M29 5l-1-4" stroke="#6a4a2c" strokeWidth="1.500" />
          <path d="M30 1c8-2 16 5 18 14-8-1-16-6-18-14z" fill="#4d8a55" />
          <path d="M19 16c8 3 18 3 27 0 0 6-4 10.500-12 10.500-9 0-14-4-15-10.500z" fill="#fdb92c" />
          <path d="M30 26.500c2.500-3 3.500-6 3.500-9.500h3.500c0 4-1.500 7-4 9.500z" fill="#d8542a" />
        </Svg>
      </div>
      <Svg w={30} h={30} vb="0 0 30 30" className="ml-[16px]"><rect x="0" y="9" width="23" height="20" rx="1" fill="#333" /><rect x="8" y="1" width="21" height="19" rx="1" fill="#f2f2f2" opacity=".85" /></Svg>
      <div className="relative ml-[24px] h-[30px] w-[30px] shrink-0">
        <FaWhatsapp size={32} color="#1d8f55" className="-mt-[1px]" />
        <span className="absolute -top-[6px] left-[16px] flex h-[20px] w-[20px] items-center justify-center rounded-full bg-[#0078d4] text-[13px] text-white">7</span>
      </div>
      <div className="ml-[26px] flex gap-[25px]">
        <BlackTile label="WB"><path d="M15 1l4.500 2v5L15 10l-4.500-2V3zM10 9l4.500 2v5L10 18l-4.500-2v-5zM20 9l4.500 2v5L20 18l-4.500-2v-5zM10.500 3L15 5l4.500-2M15 5v5M5.500 11l4.500 2 4.500-2M10 13v5M15.500 11l4.500 2 4.500-2M20 13v5" stroke="#f2a71b" strokeWidth="1.400" /></BlackTile>
        <BlackTile label="M"><circle cx="12" cy="14" r="5" stroke="#f2a71b" strokeWidth="2.200" /><circle cx="12" cy="14" r="6.500" stroke="#f2a71b" strokeWidth="2" strokeDasharray="2.500 2.600" /><circle cx="21" cy="5.500" r="3.300" stroke="#f2a71b" strokeWidth="1.600" /><circle cx="21" cy="5.500" r="4.700" stroke="#f2a71b" strokeWidth="1.500" strokeDasharray="2 1.700" /></BlackTile>
        <BlackTile label="F"><path d="M1 7c5 3 10 2 14 0s6-5 9-6c2 2-3 6-8 8s-9 1-12-1M4 10c4 4 12 3 16 1s7-5 7-8M8 14c6 2 15 0 20-7M10 18c8 2 16-2 18-9" stroke="#d99a1c" strokeWidth="1.700" /></BlackTile>
      </div>
      <Svg w={24} h={28} vb="0 0 24 28" className="ml-[27px]"><path d="M1 2l8-1c-1 7 2 9 3 9s4-2 3-9l8 1c-3 9-3 16 0 24l-8 1c1-7-2-9-3-9s-4 2-3 9l-8-1c3-8 3-15 0-24z" fill="#f4603e" /></Svg>
      <Svg w={30} h={30} vb="0 0 30 30" className="ml-[28px]">
        <defs><radialGradient id="planet" cx=".4" cy=".35" r=".6"><stop stopColor="#ffe0b0" /><stop offset=".5" stopColor="#a1653c" /><stop offset="1" stopColor="#1a0f14" /></radialGradient></defs>
        <rect width="30" height="30" fill="#05070c" />
        <circle cx="20" cy="13" r="10" fill="url(#planet)" />
        <path d="M8 1c8 5 14 14 13 29h-3C18 18 14 9 8 1z" fill="#4fa9dc" />
        <path d="M5 2.500c4-1 7-.5 4 2.500l-3 1.500M6 8c5 0 4 4 1 6s-4 3-6 3l4-7M17 9c-4-1-5 1-3 3s0 4-5 4" stroke="#fff" strokeWidth="1.600" />
      </Svg>
      <div className="relative ml-[16px] flex h-[48px] w-[48px] shrink-0 items-center justify-center rounded-[4px] border border-[#dcdcdc] bg-[#efefef]">
        <Svg w={30} h={32} vb="0 0 30 32">
          <path d="M1 4L15 0l13 4v19l-13 6L1 22z" fill="#b3131b" />
          <path d="M1 4L15 0l13 4-12 4z" fill="#e8262c" /><path d="M16 8l12-4v19l-12 6z" fill="#7f0b12" />
          <text x="3.500" y="20" fontFamily="Inter, sans-serif" fontWeight="800" fontSize="13" fill="#fff">S</text>
          <text x="15.500" y="20" fontFamily="Inter, sans-serif" fontWeight="800" fontSize="13" textLength="12" lengthAdjust="spacingAndGlyphs" fill="#fff">W</text>
          <rect x="10" y="21" width="19" height="9" rx="1" fill="#111" />
          <text x="11" y="28.500" fontFamily="Inter, sans-serif" fontWeight="800" fontSize="8" textLength="17" lengthAdjust="spacingAndGlyphs" fill="#fff">2025</text>
        </Svg>
        <span className="absolute -bottom-px left-[13px] h-[4px] w-[20px] rounded-full bg-[#0078d4]" />
      </div>
      <span className="ml-[17px] flex h-[28px] w-[28px] shrink-0 items-center justify-center rounded-full bg-[#7230a3]">
        <FaGithub size={22} color="#eee3f6" />
      </span>
      <Svg w={30} h={30} vb="0 0 30 30" className="ml-[27px]">
        <path d="M22 0v8L4 22.500 1 20.500v-2z" fill="#0a7cc4" /><path d="M1 10l3-2.500L22 22v8L1 12z" fill="#1590dd" />
        <path d="M22 0l8 3.500v23L22 30z" fill="#2aa7f2" />
      </Svg>
      <span className="ml-[26px] flex h-[27px] w-[28px] shrink-0 items-center justify-center rounded-[4px] bg-[#001e36] font-['Noto_Sans'] text-[15px] font-bold text-[#31a8ff]">Ps</span>
      <Svg w={30} h={28} vb="0 0 30 28" className="ml-[26px]">
        <path d="M0 3c0-1 1-2 2-2h8l3 3v6H0z" fill="#d99a0a" /><rect y="4" width="30" height="23" rx="1.500" fill="#ffd04a" />
        <path d="M0 5h11l3-2v4H0z" fill="#d99a0a" /><path d="M5 22c0-2 1-3 3-3h14c2 0 3 1 3 3v5H5z" fill="#0f6cbd" /><path d="M9 23h12" stroke="#0a4a86" strokeWidth="1.500" />
      </Svg>
      <Svg w={30} h={30} vb="0 0 30 30" className="ml-[25px]">
        <circle cx="15" cy="15" r="15" fill="#fbc116" />
        <path d="M15 15L2 7.500A15 15 0 0 1 28 7.500H15z" fill="#e33b2e" />
        <path d="M2 7.500a15 15 0 0 0 12 22.400L21 18.500 15 15z" fill="#269b4a" />
        <circle cx="15" cy="15" r="7.300" fill="#fff" /><circle cx="15" cy="15" r="5.700" fill="#3b78e7" />
      </Svg>
      <div className="ml-[94px] flex shrink-0 items-center text-[#222]">
        <Slot w="w-[20px]"><ChevronUp size={20} strokeWidth={1.800} /></Slot>
        <Svg w={22} h={20} vb="0 0 22 20" className="ml-[20px]"><path d="M5 17c-5-1-5-7-1-8 1-6 10-8 13-1" fill="#888" stroke="#444" /><circle cx="15" cy="14" r="5.500" fill="#d3232f" /><path d="M13 12l4 4M17 12l-4 4" stroke="#fff" strokeWidth="1.300" /></Svg>
        <span className="ml-[17px]"><Keyboard size={22} strokeWidth={1.500} /></span>
        <div className="ml-[23px] flex w-[30px] flex-col items-center text-[14px] leading-[20px]"><Fit w={28}>ENG</Fit><Fit w={17}>US</Fit></div>
        <Svg w={21} h={20} vb="0 0 21 20" className="ml-[21px]"><path d="M12 3H3c-1 0-1.500.5-1.500 1.500v10c0 1 .5 1.500 1.500 1.500h13v-6M5 19h9M7 16v3M12 16v3M15 1h4v6h-4zM17 7v4" stroke="#222" strokeWidth="1.300" /></Svg>
        <span className="ml-[9px]"><Volume2 size={19} strokeWidth={1.400} /></span>
        <Svg w={20} h={14} vb="0 0 20 14" className="ml-[12px]"><rect x="1" y="1" width="15.500" height="12" rx="2.500" stroke="#222" strokeWidth="1.400" /><path d="M3.500 3.500h3v7h-3zM17.500 5h2v4h-2z" fill="#222" /></Svg>
        <div className="ml-[20px] flex w-[77px] flex-col items-end text-[14px] leading-[20px]"><Fit w={35}>21:21</Fit><Fit w={77}>27-05-2025</Fit></div>
      </div>
    </div>
  );
}

export default function App() {
  return (
    <div className="flex h-[1080px] w-[1920px] flex-col overflow-hidden bg-[#f7f7f7] font-['Noto_Sans','Open_Sans',sans-serif]">
      <TitleBar />
      <CommandTabs />
      <div className="flex h-[910px] shrink-0">
        <ToolStrip />
        <PropertyPanel />
        <Viewport />
      </div>
      <ModelTabs />
      <StatusBar />
      <Taskbar />
    </div>
  );
}
